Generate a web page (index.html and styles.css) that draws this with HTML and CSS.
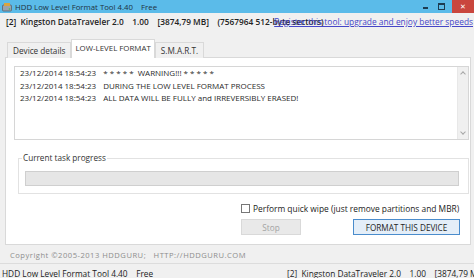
FILE: index.html
```html
<!DOCTYPE html>
<html lang="en">
<head>
    <meta charset="UTF-8">
    <title>HDD Low Level Format Tool 4.40</title>
    <link rel="stylesheet" href="styles.css">
</head>
<body>
    <div class="titlebar">
        <svg class="app-icon" width="10" height="10" viewBox="0 0 10 10">
            <rect x="0.5" y="3" width="9" height="6" rx="1" fill="#9aa3ad" stroke="#59626c" stroke-width="0.8"/>
            <rect x="2" y="1" width="6" height="3" fill="#d9a441"/>
            <circle cx="7.5" cy="7" r="0.8" fill="#3fbf4f"/>
        </svg>
        <span class="title">HDD Low Level Format Tool 4.40&nbsp;&nbsp;&nbsp;&nbsp;Free</span>
        <div class="win-buttons">
            <span class="wb-min"></span>
            <span class="wb-max"></span>
            <span class="wb-close">&#x2715;</span>
        </div>
    </div>

    <div class="window">
        <div class="device-line">
            <span class="device">[2]&nbsp;&nbsp;Kingston DataTraveler 2.0&nbsp;&nbsp;&nbsp;&nbsp;1.00&nbsp;&nbsp;&nbsp;&nbsp;[3874,79 MB]&nbsp;&nbsp;&nbsp;&nbsp;(7567964 512-byte sectors)</span>
            <a class="upgrade" href="#">Register this tool: upgrade and enjoy better speeds</a>
        </div>

        <div class="tabs">
            <div class="tab">Device details</div>
            <div class="tab active">LOW-LEVEL FORMAT</div>
            <div class="tab">S.M.A.R.T.</div>
        </div>

        <div class="panel">
            <div class="log">
                <div class="log-lines">
                    <div class="log-row"><span class="stamp">23/12/2014 18:54:23</span><span>* * * * *&nbsp;&nbsp;WARNING!!! * * * * *</span></div>
                    <div class="log-row"><span class="stamp">23/12/2014 18:54:23</span><span>DURING THE LOW LEVEL FORMAT PROCESS</span></div>
                    <div class="log-row"><span class="stamp">23/12/2014 18:54:23</span><span>ALL DATA WILL BE FULLY and IRREVERSIBLY ERASED!</span></div>
                </div>
                <div class="scrollbar">
                    <span class="arrow up"></span>
                    <span class="arrow down"></span>
                </div>
            </div>

            <div class="group">
                <div class="group-label">Current task progress</div>
                <div class="progress"></div>
            </div>

            <div class="options">
                <label class="check"><span class="box"></span>Perform quick wipe (just remove partitions and MBR)</label>
                <div class="buttons">
                    <button class="btn stop" disabled>Stop</button>
                    <button class="btn format">FORMAT THIS DEVICE</button>
                </div>
            </div>
        </div>

        <div class="copyright">Copyright &copy;2005-2013 HDDGURU;&nbsp;&nbsp;&nbsp;HTTP://HDDGURU.COM</div>
    </div>

    <div class="statusbar">
        <span class="status-left">HDD Low Level Format Tool 4.40&nbsp;&nbsp;&nbsp;&nbsp;Free</span>
        <span class="status-right">[2]&nbsp;&nbsp;Kingston DataTraveler 2.0&nbsp;&nbsp;&nbsp;&nbsp;1.00&nbsp;&nbsp;&nbsp;&nbsp;[3874,79 MB]&nbsp;&nbsp;&nbsp;&nbsp;(7567964 512-byte sectors)</span>
    </div>
</body>
</html>
```

FILE: styles.css
```css
html, body {
    margin: 0;
    padding: 0;
}
body {
    width: 474px;
    height: 278px;
    overflow: hidden;
    background-color: #f0f0f0;
    font-family: "Open Sans", "DejaVu Sans", sans-serif;
    font-size: 8px;
    color: #1a1a1a;
}
.titlebar {
    height: 13px;
    background-color: #5bbbe9;
    display: flex;
    align-items: center;
}
.app-icon {
    margin-left: 2px;
    margin-right: 3px;
}
.title {
    color: #20323f;
    font-size: 7.8px;
}
.win-buttons {
    margin-left: auto;
    display: flex;
    align-items: center;
    height: 13px;
}
.wb-min {
    width: 5px;
    height: 2px;
    background: #1d3c52;
    margin-right: 10px;
    margin-top: 3px;
}
.wb-max {
    width: 5px;
    height: 4px;
    border: 1px solid #1d3c52;
    border-top-width: 2px;
    margin-right: 7px;
}
.wb-close {
    width: 22px;
    height: 13px;
    background: #c9463d;
    color: #fff;
    font-size: 7px;
    text-align: center;
    line-height: 13px;
}
.window {
    padding: 0 3px 0 5px;
}
.device-line {
    position: relative;
    height: 16px;
    padding-top: 3px;
    padding-left: 1px;
    line-height: 12px;
    white-space: nowrap;
}
.device {
    font-weight: 600;
    font-size: 8.3px;
    color: #222;
}
.upgrade {
    position: absolute;
    right: -2px;
    top: 3px;
    font-size: 8.4px;
    color: #4646c8;
    text-decoration: underline;
}
.tabs {
    display: flex;
    align-items: flex-end;
    margin-top: 7px;
    padding-left: 2px;
    height: 18px;
}
.tab {
    height: 15px;
    line-height: 15px;
    padding: 0 5px;
    border: 1px solid #d9d9d9;
    border-bottom: none;
    background: #f0f0f0;
    color: #333;
    margin-bottom: -1px;
    font-size: 8.2px;
    white-space: nowrap;
}
.tab.active {
    height: 18px;
    line-height: 17px;
    background: #fff;
    position: relative;
    z-index: 1;
    font-size: 7.9px;
    padding: 0 3px;
}
.panel {
    background: #fff;
    border: 1px solid #d9d9d9;
    padding: 8px 1px 0 8px;
    box-sizing: border-box;
    height: 188px;
}
.log {
    height: 74px;
    border: 1px solid #d6d6d6;
    display: flex;
    box-sizing: border-box;
}
.log-lines {
    flex: 1;
    padding: 0 5px;
    font-size: 8px;
    line-height: 12.5px;
    color: #2a2a2a;
    white-space: nowrap;
}
.stamp {
    margin-right: 7px;
}
.scrollbar {
    width: 10px;
    background: #f0f0f0;
    border-left: 1px solid #e8e8e8;
    display: flex;
    flex-direction: column;
    justify-content: space-between;
    align-items: center;
    padding: 4px 0;
}
.arrow {
    width: 3px;
    height: 3px;
    border-left: 1px solid #a6a6a6;
    border-top: 1px solid #a6a6a6;
}
.arrow.up {
    transform: rotate(45deg);
    margin-top: 1px;
}
.arrow.down {
    transform: rotate(225deg);
    margin-bottom: 1px;
}
.group {
    margin: 18px 0 0 4px;
    border: 1px solid #e2e2e2;
    height: 36px;
    position: relative;
    padding: 12px 9px 0 6px;
    box-sizing: border-box;
}
.group-label {
    position: absolute;
    top: -7px;
    left: 3px;
    background: #fff;
    padding: 0 1px;
    color: #333;
    font-size: 8.2px;
}
.progress {
    height: 15px;
    background: #e6e6e6;
    border: 1px solid #cfcfcf;
    box-sizing: border-box;
}
.options {
    margin-left: 227px;
    width: 219px;
}
.check {
    display: flex;
    align-items: center;
    margin-top: 9px;
    height: 10px;
    color: #222;
    font-size: 8.4px;
    white-space: nowrap;
}
.box {
    width: 7px;
    height: 7px;
    border: 1px solid #777;
    background: #fff;
    margin-right: 3px;
    flex-shrink: 0;
}
.buttons {
    display: flex;
    justify-content: space-between;
    margin-top: 6px;
}
.btn {
    font-family: inherit;
    font-size: 8.2px;
    height: 16px;
    padding: 0;
    box-sizing: border-box;
}
.stop {
    width: 60px;
    background: #e9e9e9;
    border: 1px solid #d9d9d9;
    color: #a3a3a3;
}
.format {
    width: 107px;
    background: #e4eef8;
    border: 1px solid #4a8ccc;
    color: #1f1f1f;
}
.copyright {
    height: 18px;
    line-height: 20px;
    padding-left: 5px;
    color: #8d8d8d;
    font-size: 7.6px;
    letter-spacing: 0.5px;
}
.statusbar {
    border-top: 1px solid #dcdcdc;
    height: 14px;
    display: flex;
    align-items: center;
    white-space: nowrap;
    overflow: hidden;
    color: #222;
    font-size: 8.3px;
    padding-top: 2px;
}
.status-left {
    padding-left: 2px;
    width: 283px;
    flex-shrink: 0;
}
.status-right {
    padding-left: 2px;
}
```
